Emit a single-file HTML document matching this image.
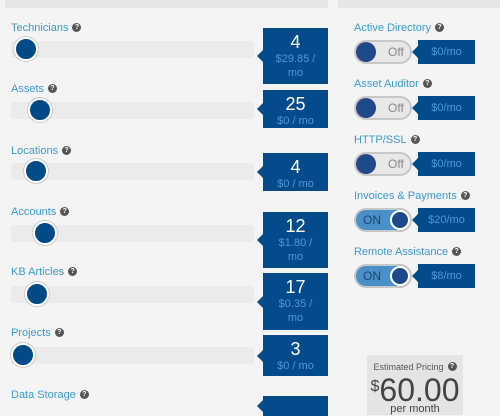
<html><head><style>
body{margin:0;width:500px;height:403px;background:#f4f4f4;font-family:"Liberation Sans",sans-serif;position:relative;overflow:hidden}
.a{position:absolute}
.hd{background:#e6e6e6;height:8px;top:0}
.lb{position:absolute;color:#3a9ad6;font-size:11px}
.q{display:inline-block;width:9px;height:9px;border-radius:50%;background:#555;color:#fff;font-size:7px;line-height:9px;text-align:center;font-weight:bold;vertical-align:2px;margin-left:4px}
.tr{position:absolute;left:11px;width:243px;height:17px;background:#ebebeb;border-radius:3px}
.th{position:absolute;width:20px;height:20px;border-radius:50%;background:#004a88;border:2px solid #fff;box-shadow:0 0 0 1px #ccc}
.vb{position:absolute;left:263px;width:65px;background:#034b8a;color:#fff;text-align:center}
.vb:before,.pb:before{content:"";position:absolute;left:-6px;top:50%;margin-top:-6px;border:6px solid transparent;border-left:0;border-right-color:#034b8a}
.vb b{display:block;font-weight:normal;font-size:18px;line-height:20px;margin-top:4px}
.vb i{display:block;font-style:normal;font-size:11px;line-height:14px;color:#4a9ad8}
.tg{position:absolute;left:354px;width:54px;height:20px;border-radius:12px;border:2px solid #c8c8c8;background:#e8e8e8}
.tg .k{position:absolute;top:0;width:20px;height:20px;border-radius:50%;background:#1f4a8a;}
.tg span{position:absolute;top:3px;font-size:12px;color:#888}
.tg.on{background:#4a90c8}
.tg.on span{color:#1f3f70}
.tg.on .k{border:2px solid #fff;width:16px;height:16px;right:0}
.pb{position:absolute;left:418px;width:57px;height:24px;background:#034b8a;color:#4a9ad8;font-size:11px;line-height:24px;text-align:center}
</style></head><body>
<div class="a hd" style="left:5px;width:323px"></div>
<div class="a hd" style="left:338px;width:162px"></div>

<div class="lb" style="left:11px;top:22px">Technicians<span class="q">?</span></div>
<div class="tr" style="top:41px"></div><div class="th" style="left:14px;top:37px"></div>
<div class="vb" style="top:28px;height:56px"><b>4</b><i>$29.85 /<br>mo</i></div>

<div class="lb" style="left:11px;top:83px">Assets<span class="q">?</span></div>
<div class="tr" style="top:102px"></div><div class="th" style="left:28px;top:98px"></div>
<div class="vb" style="top:90px;height:38px"><b>25</b><i>$0 / mo</i></div>

<div class="lb" style="left:11px;top:145px">Locations<span class="q">?</span></div>
<div class="tr" style="top:163px"></div><div class="th" style="left:24px;top:159px"></div>
<div class="vb" style="top:153px;height:38px"><b>4</b><i>$0 / mo</i></div>

<div class="lb" style="left:11px;top:206px">Accounts<span class="q">?</span></div>
<div class="tr" style="top:225px"></div><div class="th" style="left:33px;top:221px"></div>
<div class="vb" style="top:212px;height:56px"><b>12</b><i>$1.80 /<br>mo</i></div>

<div class="lb" style="left:11px;top:266px">KB Articles<span class="q">?</span></div>
<div class="tr" style="top:286px"></div><div class="th" style="left:25px;top:282px"></div>
<div class="vb" style="top:273px;height:57px"><b>17</b><i>$0.35 /<br>mo</i></div>

<div class="lb" style="left:11px;top:327px">Projects<span class="q">?</span></div>
<div class="tr" style="top:347px"></div><div class="th" style="left:11px;top:343px"></div>
<div class="vb" style="top:335px;height:41px"><b>3</b><i>$0 / mo</i></div>

<div class="lb" style="left:11px;top:389px">Data Storage<span class="q">?</span></div>
<div class="vb" style="top:396px;height:20px"></div>

<div class="lb" style="left:354px;top:22px">Active Directory<span class="q">?</span></div>
<div class="tg" style="top:40px"><div class="k"></div><span style="left:32px">Off</span></div>
<div class="pb" style="top:40px">$0/mo</div>

<div class="lb" style="left:354px;top:78px">Asset Auditor<span class="q">?</span></div>
<div class="tg" style="top:96px"><div class="k"></div><span style="left:32px">Off</span></div>
<div class="pb" style="top:96px">$0/mo</div>

<div class="lb" style="left:354px;top:134px">HTTP/SSL<span class="q">?</span></div>
<div class="tg" style="top:152px"><div class="k"></div><span style="left:32px">Off</span></div>
<div class="pb" style="top:152px">$0/mo</div>

<div class="lb" style="left:354px;top:190px">Invoices &amp; Payments<span class="q">?</span></div>
<div class="tg on" style="top:208px"><span style="left:7px">ON</span><div class="k"></div></div>
<div class="pb" style="top:208px">$20/mo</div>

<div class="lb" style="left:354px;top:246px">Remote Assistance<span class="q">?</span></div>
<div class="tg on" style="top:264px"><span style="left:7px">ON</span><div class="k"></div></div>
<div class="pb" style="top:264px">$8/mo</div>

<div class="a" style="left:367px;top:355px;width:96px;height:60px;background:#e4e4e4;text-align:center;color:#555">
<div style="font-size:9px;margin-top:7px">Estimated Pricing<span class="q">?</span></div>
<div style="font-size:32px;line-height:30px;color:#444"><span style="font-size:16px;vertical-align:10px">$</span>60.00</div>
<div style="font-size:11px;line-height:8px;color:#444">per month</div>
</div>
</body></html>
